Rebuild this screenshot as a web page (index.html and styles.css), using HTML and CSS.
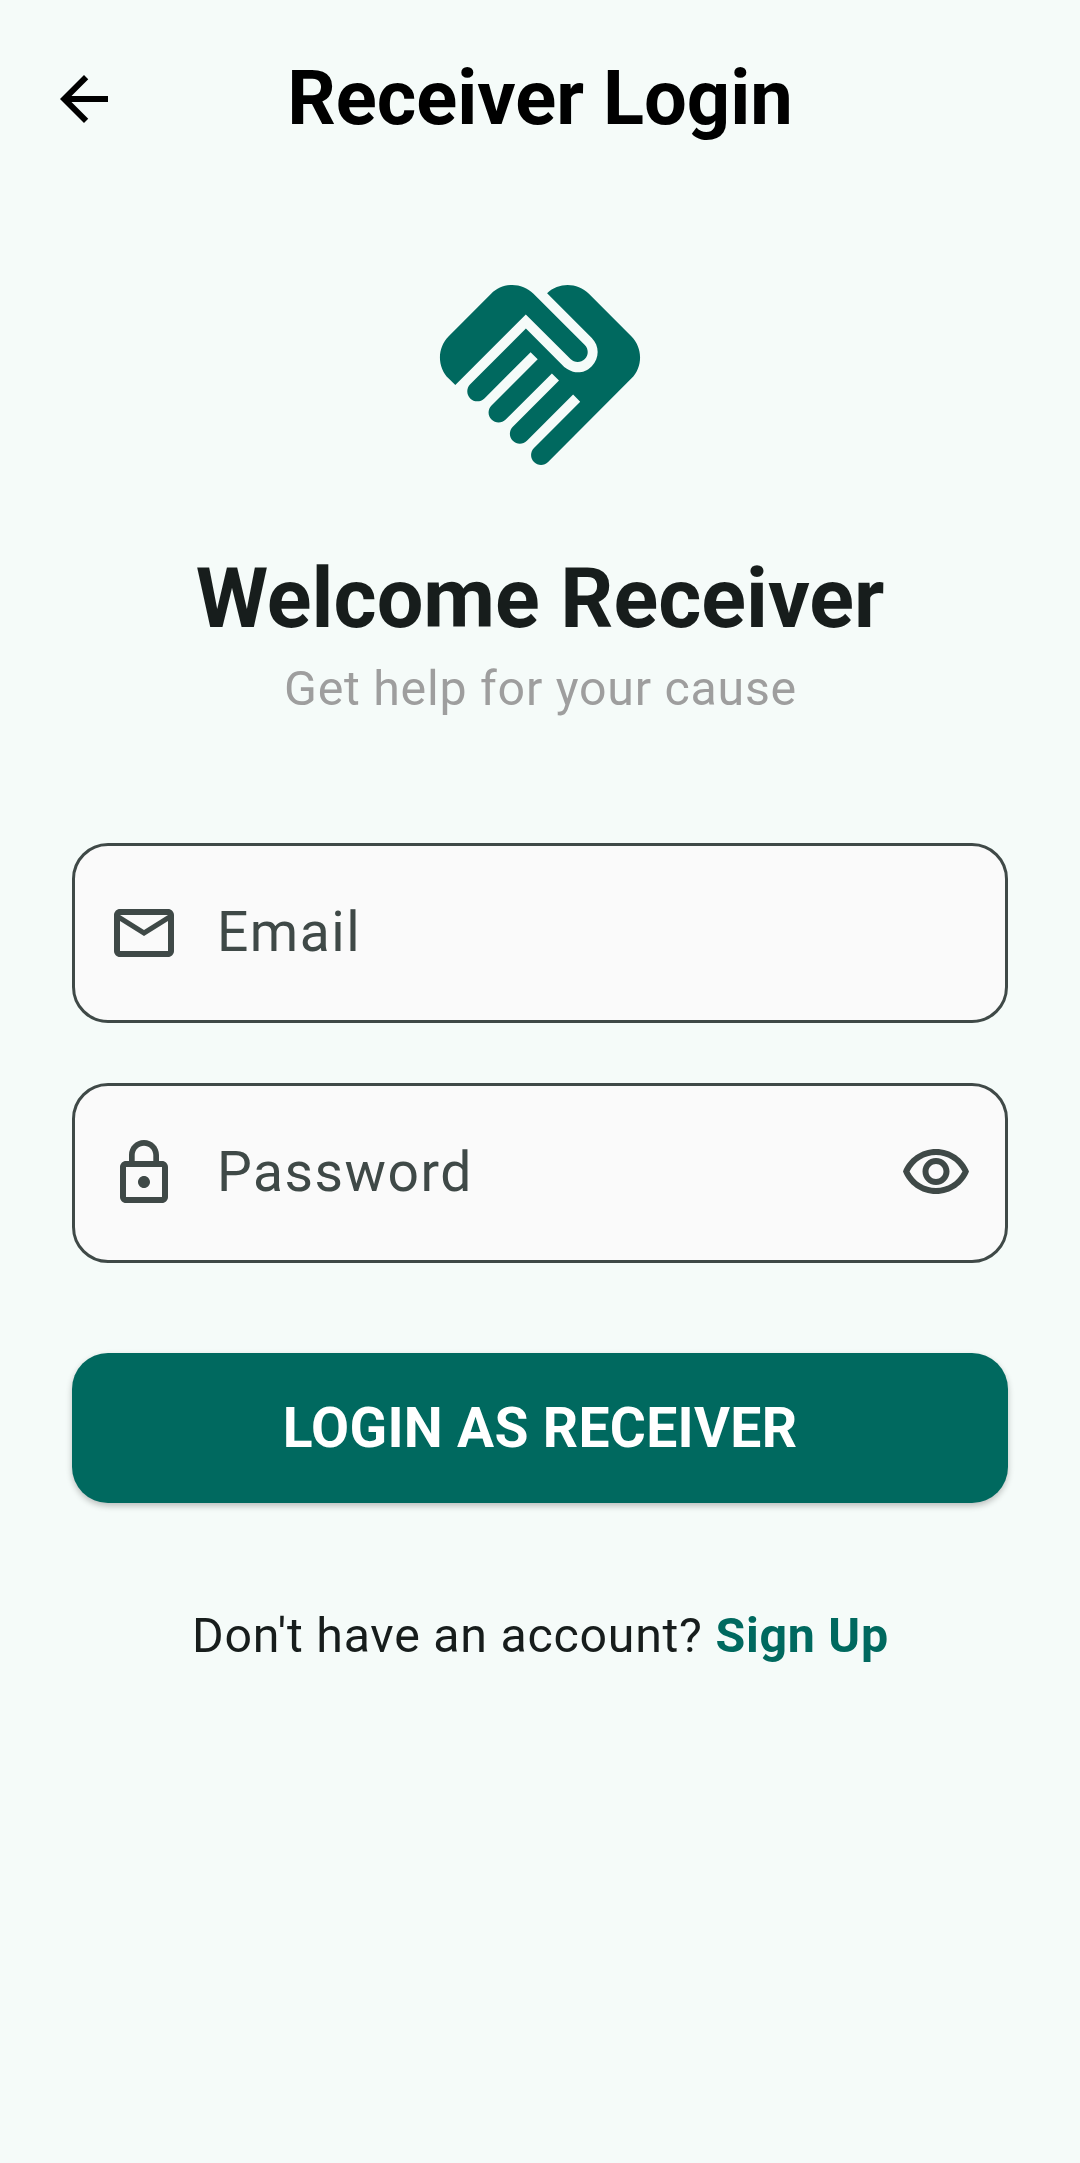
FILE: index.html
```html
<!DOCTYPE html>
<html lang="en">
<head>
<meta charset="utf-8">
<title>Receiver Login</title>
<link rel="stylesheet" href="styles.css">
</head>
<body>
<header class="app-bar">
  <button class="icon-button" type="button" aria-label="Back">
    <svg class="icon" viewBox="0 0 24 24"><path d="M20 11H7.83l5.59-5.59L12 4l-8 8 8 8 1.41-1.41L7.83 13H20v-2z"/></svg>
  </button>
  <h1 class="app-title">Receiver Login</h1>
</header>
<main class="content">
  <svg class="logo" viewBox="0 0 24 24" aria-hidden="true"><path d="M16.48,10.41c-0.39,0.39-1.04,0.39-1.43,0l-4.47-4.46l-7.05,7.04l-0.66-0.63c-1.17-1.17-1.17-3.07,0-4.24l4.24-4.24c1.17-1.17,3.07-1.17,4.24,0L16.48,9C16.87,9.39,16.87,10.02,16.48,10.41z M17.18,8.29c0.78,0.78,0.78,2.05,0,2.83c-1.27,1.27-2.61,0.22-2.83,0l-3.76-3.76l-5.57,5.57c-0.39,0.39-0.39,1.02,0,1.41c0.39,0.39,1.02,0.39,1.42,0l4.62-4.62l0.71,0.71l-4.62,4.62c-0.39,0.39-0.39,1.02,0,1.41c0.39,0.39,1.02,0.39,1.42,0l4.62-4.62l0.71,0.71l-4.62,4.62c-0.39,0.39-0.39,1.02,0,1.41c0.39,0.39,1.02,0.39,1.41,0l4.62-4.62l0.71,0.71l-4.62,4.62c-0.39,0.39-0.39,1.02,0,1.41c0.39,0.39,1.02,0.39,1.41,0l8.32-8.34c1.17-1.17,1.17-3.07,0-4.24l-4.24-4.24c-1.15-1.15-3.01-1.17-4.18-0.06L17.18,8.29z"/></svg>
  <h2 class="welcome">Welcome Receiver</h2>
  <p class="subtitle">Get help for your cause</p>
  <form class="form">
    <div class="field">
      <svg class="icon" viewBox="0 0 24 24"><path d="M22 6c0-1.1-.9-2-2-2H4c-1.1 0-2 .9-2 2v12c0 1.1.9 2 2 2h16c1.1 0 2-.9 2-2V6zm-2 0l-8 5-8-5h16zm0 12H4V8l8 5 8-5v10z"/></svg>
      <span class="field-label">Email</span>
    </div>
    <div class="field">
      <svg class="icon" viewBox="0 0 24 24"><path d="M12 17c1.1 0 2-.9 2-2s-.9-2-2-2-2 .9-2 2 .9 2 2 2zm6-9h-1V6c0-2.76-2.24-5-5-5S7 3.24 7 6v2H6c-1.1 0-2 .9-2 2v10c0 1.1.9 2 2 2h12c1.1 0 2-.9 2-2V10c0-1.1-.9-2-2-2zM8.9 6c0-1.71 1.39-3.1 3.1-3.1s3.1 1.39 3.1 3.1v2H8.9V6zM18 20H6V10h12v10z"/></svg>
      <span class="field-label">Password</span>
      <svg class="icon" viewBox="0 0 24 24"><path d="M12 6c3.79 0 7.17 2.13 8.82 5.5C19.17 14.87 15.79 17 12 17s-7.17-2.13-8.82-5.5C4.83 8.13 8.21 6 12 6m0-2C7 4 2.73 7.11 1 11.5 2.73 15.89 7 19 12 19s9.27-3.11 11-7.5C21.27 7.11 17 4 12 4zm0 5c1.38 0 2.5 1.12 2.5 2.5S13.38 14 12 14s-2.5-1.12-2.5-2.5S10.62 9 12 9m0-2c-2.48 0-4.5 2.02-4.5 4.5S9.52 16 12 16s4.5-2.02 4.5-4.5S14.48 7 12 7z"/></svg>
    </div>
    <button class="submit" type="button">LOGIN AS RECEIVER</button>
  </form>
  <p class="signup">Don't have an account? <a class="signup-link">Sign Up</a></p>
</main>
</body>
</html>
```

FILE: styles.css
```css
* {
  box-sizing: border-box;
}

body {
  margin: 0;
  min-height: 2163px;
  background: #f5fbf9;
  color: #171d1c;
  font-family: Roboto, "Liberation Sans", sans-serif;
}

h1, h2, p {
  margin: 0;
  font-weight: inherit;
}

button {
  border: 0;
  padding: 0;
  font-family: inherit;
}

.icon {
  display: block;
  width: 72px;
  height: 72px;
  flex: none;
  fill: currentColor;
}

.app-bar {
  display: grid;
  grid-template-columns: 72px 1fr 72px;
  align-items: center;
  height: 183px;
  padding: 15px 48px 0;
  color: #000;
}

.icon-button {
  background: none;
  color: inherit;
}

.app-title {
  font-size: 75.9px;
  font-weight: 700;
  line-height: 120px;
  text-align: center;
  white-space: nowrap;
}

.content {
  display: flex;
  flex-direction: column;
  align-items: center;
  padding: 72px 72px 0;
}

.logo {
  display: block;
  width: 240px;
  height: 240px;
  fill: #00695f;
}

.welcome {
  margin-top: 54px;
  font-size: 82.8px;
  font-weight: 700;
  line-height: 100px;
  white-space: nowrap;
}

.subtitle {
  margin-top: 10px;
  padding-left: 1px;
  color: #9e9e9e;
  font-size: 48.3px;
  letter-spacing: 0.75px;
  line-height: 60px;
}

.form {
  display: flex;
  flex-direction: column;
  gap: 60px;
  width: 100%;
  margin-top: 124px;
}

.field {
  display: flex;
  align-items: center;
  gap: 36px;
  height: 180px;
  padding: 0 33px;
  border: 3px solid #3f4947;
  border-radius: 36px;
  background: #fafafa;
  color: #3f4947;
}

.field-label {
  flex: 1;
  padding: 0 0 2px 1px;
  font-size: 55.2px;
  letter-spacing: 1.5px;
  line-height: 72px;
}

.submit {
  height: 150px;
  margin-top: 30px;
  padding-bottom: 1px;
  border-radius: 36px;
  background: #00695f;
  box-shadow: 0 3px 6px rgba(0, 0, 0, 0.24);
  color: #fff;
  font-size: 55.2px;
  font-weight: 700;
  letter-spacing: 0.3px;
}

.signup {
  margin-top: 103px;
  padding-left: 1px;
  font-size: 48.3px;
  letter-spacing: 0.75px;
  line-height: 60px;
  white-space: nowrap;
}

.signup-link {
  color: #00695f;
  font-weight: 700;
}
```
